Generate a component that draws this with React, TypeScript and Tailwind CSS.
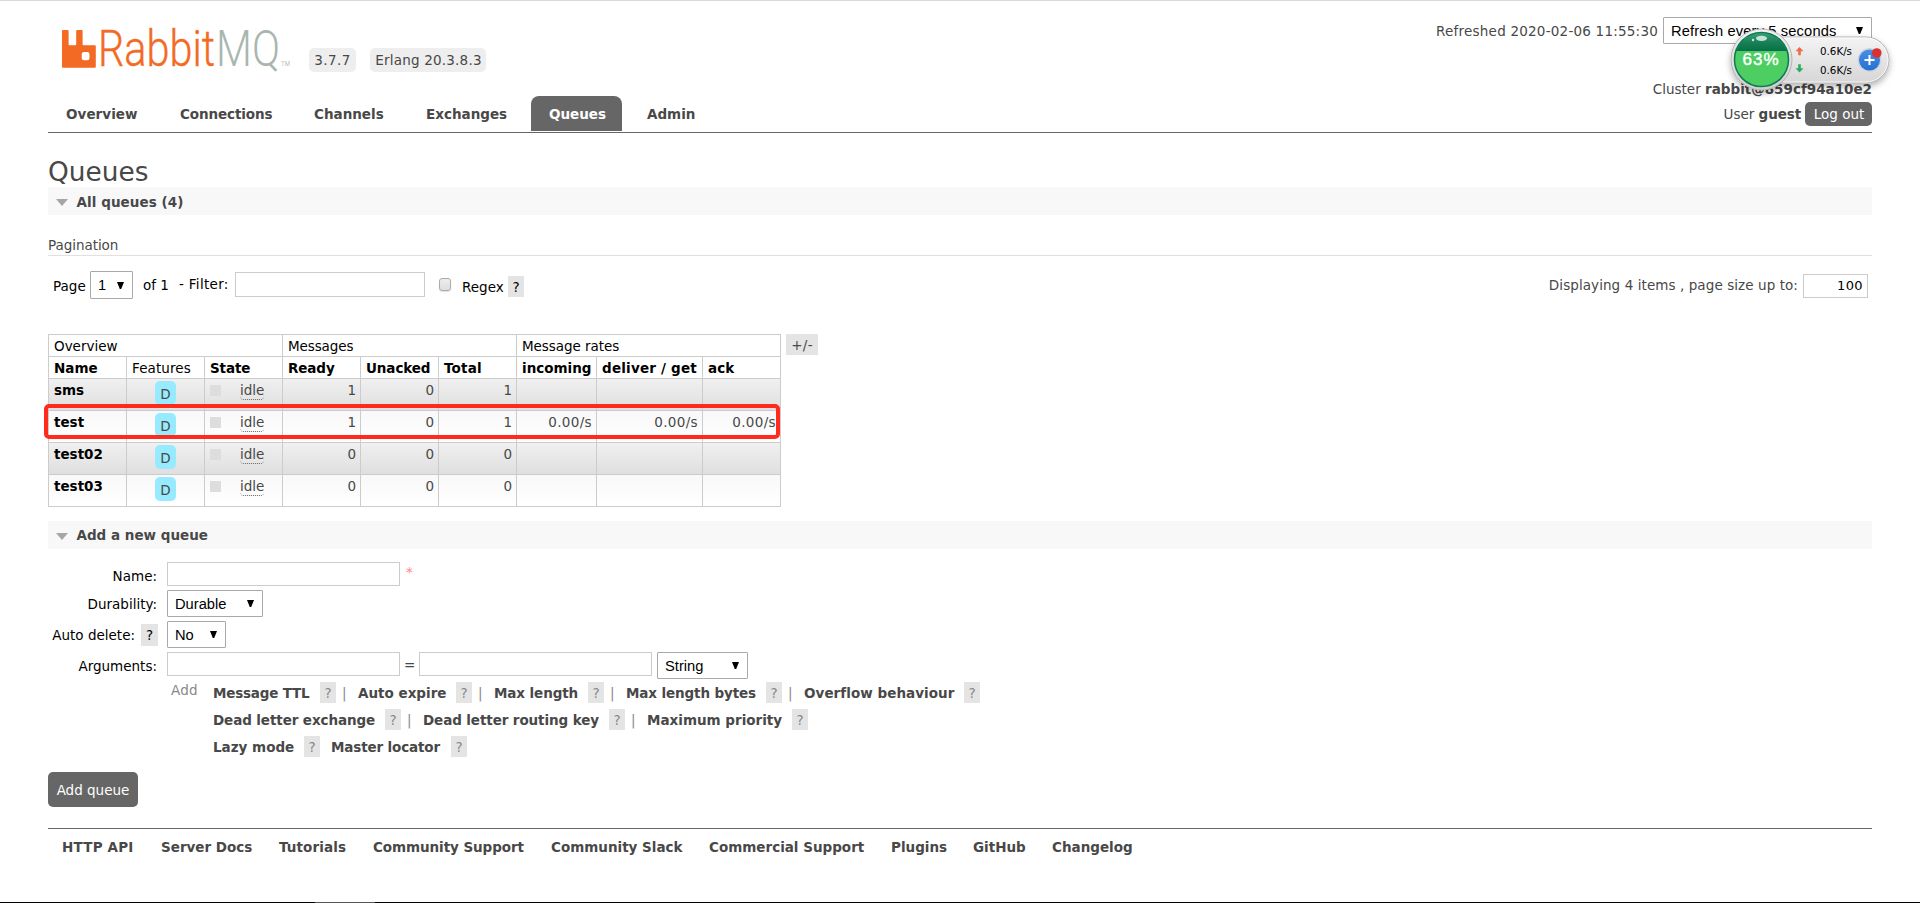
import React from "react";
import clsx from "clsx";

interface NavItem {
  label: string;
  className: string;
  active?: boolean;
}

interface QueueRow {
  name: string;
  ready: number;
  unacked: number;
  total: number;
  rates?: [string, string, string];
}

interface ArgumentLink {
  label: string;
  /** Width of the label column, up to the help box */
  className: string;
  /** Draw a separator after the help box */
  separator?: boolean;
}

const navItems: NavItem[] = [
  { label: "Overview", className: "w-[107px] tracking-[0.05px]" },
  { label: "Connections", className: "w-[127px] tracking-[-0.1px]" },
  { label: "Channels", className: "w-[105px]" },
  { label: "Exchanges", className: "w-[116px]" },
  { label: "Queues", className: "w-[91px]", active: true },
  { label: "Admin", className: "w-[84px]" },
];

const queues: QueueRow[] = [
  { name: "sms", ready: 1, unacked: 0, total: 1 },
  { name: "test", ready: 1, unacked: 0, total: 1, rates: ["0.00/s", "0.00/s", "0.00/s"] },
  { name: "test02", ready: 0, unacked: 0, total: 0 },
  { name: "test03", ready: 0, unacked: 0, total: 0 },
];

const columns = [
  { label: "Name", width: "w-[78px]" },
  { label: "Features", width: "w-[78px]", className: "font-normal tracking-[0.1px]" },
  { label: "State", width: "w-[78px]", className: "tracking-[-0.1px]" },
  { label: "Ready", width: "w-[78px]", className: "tracking-[-0.1px]" },
  { label: "Unacked", width: "w-[78px]", className: "tracking-[-0.1px]" },
  { label: "Total", width: "w-[78px]", className: "tracking-[0.2px]" },
  { label: "incoming", width: "w-[80px]" },
  { label: "deliver / get", width: "w-[106px]", className: "tracking-[0.2px]" },
  { label: "ack", width: "w-[78px]" },
];

const argumentLinks: ArgumentLink[][] = [
  [
    { label: "Message TTL", className: "w-[107px] tracking-[-0.2px]", separator: true },
    { label: "Auto expire", className: "w-[98px]", separator: true },
    { label: "Max length", className: "w-[94px] tracking-[-0.1px]", separator: true },
    { label: "Max length bytes", className: "w-[140px] tracking-[-0.12px]", separator: true },
    { label: "Overflow behaviour", className: "w-[160px] tracking-[0.05px]" },
  ],
  [
    { label: "Dead letter exchange", className: "w-[172px] tracking-[-0.1px]", separator: true },
    { label: "Dead letter routing key", className: "w-[186px] tracking-[-0.1px]", separator: true },
    { label: "Maximum priority", className: "w-[145px]" },
  ],
  [
    { label: "Lazy mode", className: "w-[91px]" },
    { label: "Master locator", className: "w-[120px] tracking-[-0.14px]" },
  ],
];

const footerLinks = [
  { label: "HTTP API", className: "w-[99px] tracking-[0.2px]" },
  { label: "Server Docs", className: "w-[118px]" },
  { label: "Tutorials", className: "w-[94px] tracking-[0.1px]" },
  { label: "Community Support", className: "w-[178px] tracking-[-0.07px]" },
  { label: "Community Slack", className: "w-[158px]" },
  { label: "Commercial Support", className: "w-[182px]" },
  { label: "Plugins", className: "w-[82px]" },
  { label: "GitHub", className: "w-[79px]" },
  { label: "Changelog", className: "w-[90px]" },
];

const Logo = () => (
  <svg width="238" height="66" viewBox="0 -10 238 66" className="-mt-[11px] shrink-0">
    <path
      fill="#f36a24"
      fillRule="evenodd"
      d="M1 3h4.6a1 1 0 0 1 1 1v13.2a1 1 0 0 0 1 1h5.6a1 1 0 0 0 1-1V4a1 1 0 0 1 1-1h4.4a1 1 0 0 1 1 1v13.2a1 1 0 0 0 1 1h11.2a1 1 0 0 1 1 1V39.8a1 1 0 0 1-1 1H1a1 1 0 0 1-1-1V4a1 1 0 0 1 1-1ZM22 25a2.3 2.3 0 0 0-2.3 2.3v3.6a2.3 2.3 0 0 0 2.3 2.3h3.2a2.3 2.3 0 0 0 2.3-2.3v-3.6a2.3 2.3 0 0 0-2.3-2.3Z"
    />
    <g fontFamily="Roboto, sans-serif" fontWeight="300" fontSize="50.5">
      <text x="36" y="39" textLength="117" lengthAdjust="spacingAndGlyphs" fill="#f36a24" stroke="#f36a24" strokeWidth="0.4">
        Rabbit
      </text>
      <text x="154" y="39" textLength="64" lengthAdjust="spacingAndGlyphs" fill="#a9b6b0">
        MQ
      </text>
    </g>
    <text x="219" y="39" fontFamily="Roboto, sans-serif" fontSize="7" textLength="9" lengthAdjust="spacingAndGlyphs" fill="#b8c2bd">
      TM
    </text>
  </svg>
);

const Caret = () => (
  <svg width="7" height="7" viewBox="0 0 7 7" className="shrink-0">
    <path d="M0 0h7L4.2 7H2.8Z" fill="#000" />
  </svg>
);

const Select = ({ value, className }: { value: string; className: string }) => (
  <div
    className={clsx(
      "flex items-center justify-between rounded-[1px] border border-[#a9a9a9] bg-white pl-[7px] pr-[8px] font-['Liberation_Sans',sans-serif] text-[14.7px] leading-[26px] text-black",
      className
    )}
  >
    <span>{value}</span>
    <Caret />
  </div>
);

const Help = ({ className }: { className?: string }) => (
  <span className={clsx("block h-[21px] w-4 shrink-0 bg-[#e4e4e4] text-center leading-[22px]", className)}>?</span>
);

const TextInput = ({ className }: { className: string }) => (
  <input type="text" className={clsx("block shrink-0 border border-[#ccc] bg-white", className)} />
);

const SectionTitle = ({ className, children }: { className?: string; children: React.ReactNode }) => (
  <h2 className={clsx("flex h-7 items-start bg-[#f8f8f8] pl-[7.5px] font-bold", className)}>
    <svg width="12" height="7" viewBox="0 0 12 7" className="mr-[9px] mt-3">
      <path d="M0 0h12L6 7Z" fill="#a6a6a6" />
    </svg>
    {children}
  </h2>
);

const FormRow = ({ label, className, children }: { label: React.ReactNode; className: string; children: React.ReactNode }) => (
  <div className={clsx("flex items-start", className)}>
    <div className="mr-[10px] mt-1 flex w-[109px] justify-end text-black">{label}</div>
    {children}
  </div>
);

// Floating network speed meter that sits above the page
const SpeedMeter = () => (
  <div className="absolute left-[1722px] top-[20px]">
    <svg width="180" height="84" viewBox="0 0 180 84">
      <defs>
        <linearGradient id="pill" x1="0" y1="0" x2="0" y2="1">
          <stop offset="0" stopColor="#f4f4f4" />
          <stop offset="1" stopColor="#d6d6d6" />
        </linearGradient>
        <linearGradient id="ring" x1="0" y1="0" x2="0" y2="1">
          <stop offset="0" stopColor="#f2f2f2" />
          <stop offset="1" stopColor="#cfcfcf" />
        </linearGradient>
        <linearGradient id="dark" x1="0" y1="0" x2="0" y2="1">
          <stop offset="0" stopColor="#3fa47e" />
          <stop offset="0.5" stopColor="#1b8259" />
          <stop offset="1" stopColor="#067046" />
        </linearGradient>
        <linearGradient id="blue" x1="0" y1="0" x2="0" y2="1">
          <stop offset="0" stopColor="#4a8fe4" />
          <stop offset="1" stopColor="#2570d2" />
        </linearGradient>
        <clipPath id="ball">
          <circle cx="39.5" cy="39.5" r="26.5" />
        </clipPath>
        <filter id="shadow" x="-20%" y="-20%" width="140%" height="150%">
          <feDropShadow dx="0" dy="3" stdDeviation="3" floodColor="#000" floodOpacity="0.3" />
        </filter>
      </defs>
      <g filter="url(#shadow)">
        <rect x="40" y="17" width="127" height="46" rx="23" fill="url(#pill)" stroke="#adadad" />
        <rect x="41" y="18" width="125" height="44" rx="22" fill="none" stroke="#fff" strokeOpacity="0.8" />
        <circle cx="39.5" cy="39.5" r="30.5" fill="url(#ring)" stroke="#b4b4b4" strokeWidth="1" />
      </g>
      <g clipPath="url(#ball)">
        <rect x="12" y="12" width="56" height="56" fill="#4dce62" />
        <rect x="12" y="12" width="56" height="19" fill="url(#dark)" />
      </g>
      <circle cx="39.5" cy="39.5" r="27" fill="none" stroke="#0c7b52" strokeWidth="1.6" />
      <ellipse cx="39.5" cy="18.3" rx="5.5" ry="2.6" fill="#fff" fillOpacity="0.75" />
      <circle cx="31" cy="20" r="1.2" fill="#fff" fillOpacity="0.8" />
      <text x="38.5" y="44.5" textAnchor="middle" fontFamily="Liberation Sans, sans-serif" fontSize="17" textLength="36" fill="#fff" stroke="#fff" strokeWidth="0.4">
        63%
      </text>
      <path d="M77.5 27l4 4.2h-2.7v4h-2.6v-4h-2.7Z" fill="#f0694a" />
      <path d="M77.5 52.5l4-4.2h-2.7v-4h-2.6v4h-2.7Z" fill="#2fa860" />
      <g fontFamily="DejaVu Sans Condensed, DejaVu Sans, sans-serif" fontSize="11" fill="#000">
        <text x="98" y="35" textLength="32" lengthAdjust="spacingAndGlyphs">0.6K/s</text>
        <text x="98" y="54" textLength="32" lengthAdjust="spacingAndGlyphs">0.6K/s</text>
      </g>
      <circle cx="147.5" cy="40" r="12" fill="#cdd5df" />
      <circle cx="147.5" cy="40" r="10.5" fill="url(#blue)" />
      <path d="M147.5 35v10M142.5 40h10" stroke="#fff" strokeWidth="2" />
      <circle cx="154.8" cy="33" r="4.8" fill="#d93030" />
    </svg>
  </div>
);

const Header = () => (
  <header className="flex h-[132px] justify-between border-b border-[#666]">
    <div className="flex flex-col justify-between pb-px">
      <div className="flex h-[80px] pl-[14px] pt-[27px]">
        <Logo />
        <span className="ml-[9px] mt-5 h-6 w-[47px] rounded-[5px] bg-[#eee] text-center leading-6 tracking-[0.4px]">3.7.7</span>
        <span className="ml-[14px] mt-5 h-6 w-[116px] rounded-[5px] bg-[#eee] pl-px text-center leading-6 tracking-[0.2px]">
          Erlang 20.3.8.3
        </span>
      </div>
      <nav className="flex gap-[7px] font-bold">
        {navItems.map((item) => (
          <a
            key={item.label}
            className={clsx(
              "h-[35px] pl-[18px] leading-9",
              item.className,
              item.active && "rounded-t-[8px] bg-[#666] text-white"
            )}
          >
            {item.label}
          </a>
        ))}
      </nav>
    </div>
    <div className="flex flex-col items-end pt-4">
      <div className="flex h-[27px]">
        <span className="mr-[5px] leading-7 tracking-[0.22px]">Refreshed 2020-02-06 11:55:30</span>
        <Select value="Refresh every 5 seconds" className="w-[209px] tracking-[0.13px]" />
      </div>
      <div className="mt-[35px]">
        Cluster <b>rabbit@859cf94a10e2</b>
      </div>
      <div className="mt-[3px] flex h-6 leading-6">
        <span>
          User <b className="tracking-[-0.1px]">guest</b>
        </span>
        <button className="ml-1 w-[67px] rounded-[5px] bg-[#666] pl-px text-white">Log out</button>
      </div>
    </div>
  </header>
);

const Pagination = () => (
  <>
    <div className="mt-5 h-[21px] border-b border-[#e0e0e0] tracking-[-0.05px]">Pagination</div>
    <div className="flex h-[78px] items-start pl-[5px] text-black">
      <span className="mt-5 w-[37px]">Page</span>
      <Select value="1" className="mt-[15px] h-7 w-[43px]" />
      <span className="ml-[10px] mt-[19px] w-9">of 1</span>
      <span className="mt-[18px] w-14 tracking-[0.3px]">- Filter:</span>
      <TextInput className="mt-4 h-[25px] w-[190px]" />
      <span className="ml-[14px] mt-[22px] h-[13px] w-[12px] rounded-[3px] border border-[#ababab] bg-linear-to-b from-[#ededed] to-[#dedede] shadow-[0_1px_1px_rgba(0,0,0,0.12)]" />
      <span className="ml-[11px] mt-[21px] w-[46px]">Regex</span>
      <Help className="mt-5" />
      <div className="ml-auto mr-1 flex items-start">
        <span className="mt-[19px] mr-[5px] tracking-[0.08px] text-[#484848]">Displaying 4 items , page size up to:</span>
        <div className="mt-[18px] h-6 w-[65px] border border-[#ccc] pr-1 text-right text-[13px] leading-[22px] tracking-[0.4px]">100</div>
      </div>
    </div>
  </>
);

const cell = "border-b border-r border-[#ccc] align-top";

const QueueTable = () => (
  <div className="relative flex items-start">
    <table className="w-[733px] table-fixed border-separate border-spacing-0 border-l border-t border-[#ccc] bg-white leading-5">
      <colgroup>
        {columns.map((column) => (
          <col key={column.label} className={column.width} />
        ))}
      </colgroup>
      <thead className="text-left text-black">
        <tr className="h-[22px]">
          <th colSpan={3} className={clsx(cell, "pl-[5px] pt-px font-normal")}>Overview</th>
          <th colSpan={3} className={clsx(cell, "pl-[5px] pt-px font-normal tracking-[-0.1px]")}>Messages</th>
          <th colSpan={3} className={clsx(cell, "pl-[5px] pt-px font-normal tracking-[-0.05px]")}>Message rates</th>
        </tr>
        <tr className="h-[22px]">
          {columns.map((column) => (
            <th key={column.label} className={clsx(cell, "whitespace-nowrap pl-[5px] pt-px", column.className)}>
              {column.label}
            </th>
          ))}
        </tr>
      </thead>
      <tbody>
        {queues.map((queue, index) => (
          <tr
            key={queue.name}
            className={clsx("h-8 *:bg-linear-to-b", index % 2 === 0 ? "*:from-[#f0f0f0] *:to-[#dfdfdf]" : "*:from-[#f8f8f8] *:to-white")}
          >
            <td className={clsx(cell, "pl-[5px] pt-px font-bold text-black")}>{queue.name}</td>
            <td className={clsx(cell, "pl-[28px] pt-[2px]")}>
              <span className="block h-6 w-[21px] rounded-[5px] bg-[#98ebff] text-center leading-[26px]">D</span>
            </td>
            <td className={clsx(cell, "pl-[5px] pt-px")}>
              <div className="flex">
                <span className="mt-[5px] mr-[19px] h-[11px] w-[11px] bg-[#ddd]" />
                <span className="h-5 rounded-b-[4px] border-b border-dotted border-[#666]">idle</span>
              </div>
            </td>
            <td className={clsx(cell, "pr-1 pt-px text-right")}>{queue.ready}</td>
            <td className={clsx(cell, "pr-1 pt-px text-right")}>{queue.unacked}</td>
            <td className={clsx(cell, "pr-1 pt-px text-right")}>{queue.total}</td>
            {[0, 1, 2].map((i) => (
              <td key={i} className={clsx(cell, "pr-1 pt-px text-right tracking-[0.35px]")}>
                {queue.rates?.[i]}
              </td>
            ))}
          </tr>
        ))}
      </tbody>
    </table>
    <span className="ml-[5px] h-[21px] w-8 bg-[#e4e4e4] text-center leading-[22px] tracking-[0.3px]">+/-</span>
    {/* Highlighted queue */}
    <div className="absolute left-[-4px] top-[70px] h-[35px] w-[736px] rounded-[5px] border-[4px] border-[#ff2010] opacity-95" />
  </div>
);

const AddQueueForm = () => (
  <>
    <FormRow label="Name:" className="mt-[13px] h-7">
      <TextInput className="h-6 w-[233px]" />
      <span className="ml-1.5 text-[#f88]">*</span>
    </FormRow>
    <FormRow label="Durability:" className="h-[31px]">
      <Select value="Durable" className="h-[27px] w-[96px]" />
    </FormRow>
    <FormRow
      className="h-[31px]"
      label={
        <>
          Auto delete:
          <Help className="-mr-px ml-[6px] -mt-px h-[22px] w-[17px]" />
        </>
      }
    >
      <Select value="No" className="h-[27px] w-[59px]" />
    </FormRow>
    <FormRow label="Arguments:" className="h-[30px]">
      <TextInput className="h-6 w-[233px]" />
      <span className="ml-1 mt-[3px] w-[15px]">=</span>
      <TextInput className="h-6 w-[233px]" />
      <Select value="String" className="ml-[5px] h-[27px] w-[91px]" />
    </FormRow>
    <div className="flex items-start pl-[123px]">
      <span className="w-[42px] leading-4 tracking-[0.2px] text-[#888]">Add</span>
      <div>
        {argumentLinks.map((row, index) => (
          <div key={index} className="flex h-[27px] leading-[22px]">
            {row.map((link) => (
              <React.Fragment key={link.label}>
                <b className={clsx("whitespace-nowrap", link.className)}>{link.label}</b>
                <Help className="text-[#888]" />
                <span className={clsx("pl-[6px] text-[#888]", link.separator ? "w-[22px]" : "w-[11px]")}>
                  {link.separator && "|"}
                </span>
              </React.Fragment>
            ))}
          </div>
        ))}
      </div>
    </div>
    <button className="mt-[9px] block h-[35px] w-[90px] rounded-[5px] bg-[#666] leading-9 text-white">Add queue</button>
  </>
);

export default function App() {
  return (
    <div className="relative flex h-[903px] w-[1920px] flex-col overflow-hidden bg-white font-['DejaVu_Sans',Verdana,sans-serif] text-[13.5px] leading-5 text-[#484848]">
      <div className="h-px bg-[#d9d9dd]" />
      <div className="mx-12 flex-1">
        <Header />
        <h1 className="mt-[22px] h-8 text-[26.4px] leading-[34px]">Queues</h1>
        <SectionTitle className="leading-[30px] tracking-[0.07px]">All queues (4)</SectionTitle>
        <Pagination />
        <QueueTable />
        <SectionTitle className="mt-[14px] leading-7">Add a new queue</SectionTitle>
        <AddQueueForm />
        <footer className="mt-[21px] flex border-t border-[#666] pl-[14px] font-bold leading-9">
          {footerLinks.map((link) => (
            <a key={link.label} className={clsx("whitespace-nowrap", link.className)}>
              {link.label}
            </a>
          ))}
        </footer>
      </div>
      <div className="flex h-px bg-black pl-[315px]">
        <div className="w-[60px] bg-[#555]" />
      </div>
      <SpeedMeter />
    </div>
  );
}
